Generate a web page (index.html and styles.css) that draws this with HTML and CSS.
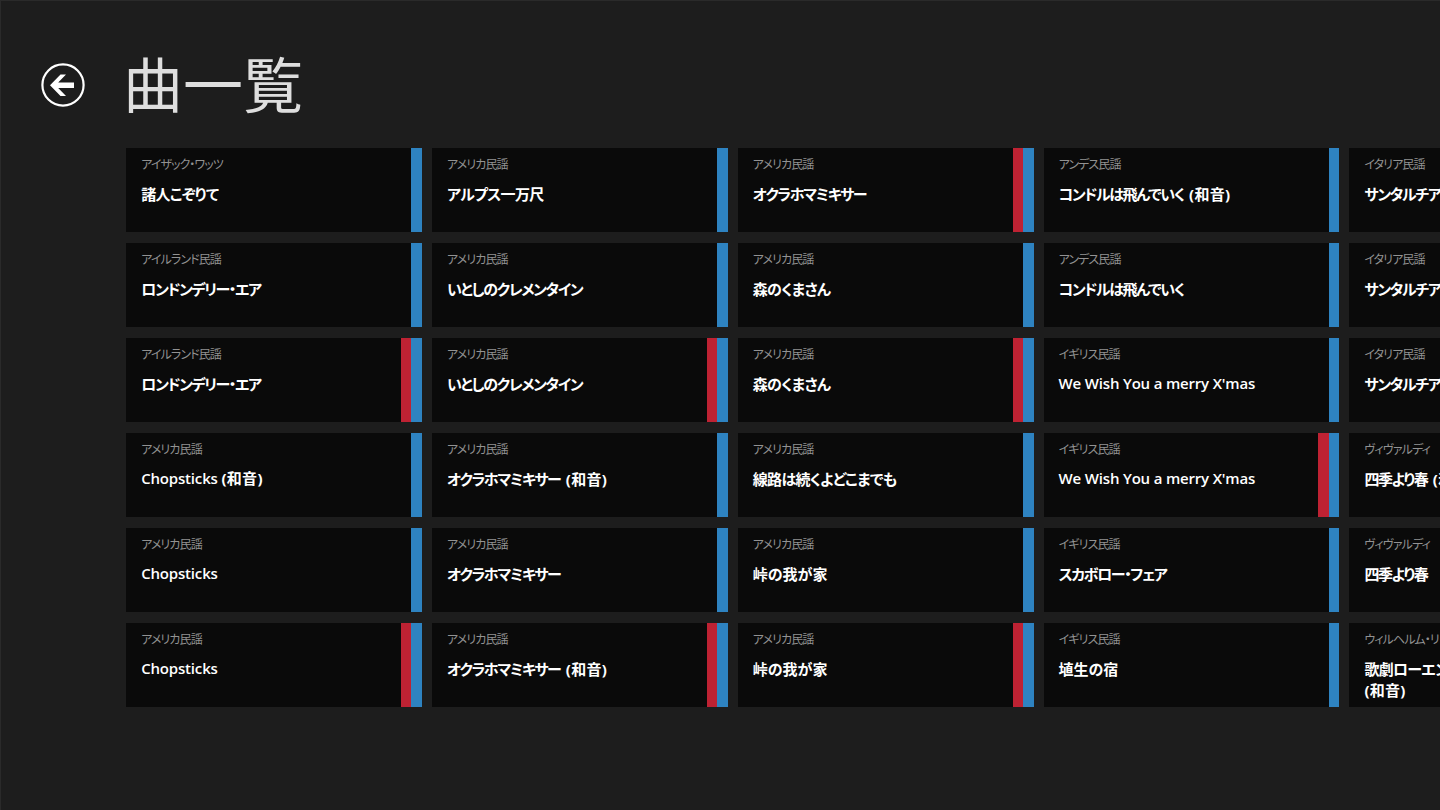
FILE: index.html
```html
<!DOCTYPE html>
<html lang="ja">
<head>
    <meta charset="UTF-8">
    <title>曲一覧</title>
    <link rel="stylesheet" href="styles.css">
</head>
<body>
<div class="page-header">
    <a class="back-button" href="javascript:void(0);">
        <svg width="44" height="44" viewBox="0 0 44 44">
            <circle cx="22" cy="22" r="20.6" fill="none" stroke="#fff" stroke-width="2.2"/>
            <path d="M9 22.2L19.5 11.5H25L17.2 19.4H33V25H17.2L25 32.9H19.5Z" fill="#fff"/>
        </svg>
    </a>
    <h1 class="page-title">曲一覧</h1>
</div>

<div class="song-grid">
    <!-- 1列目 -->
    <div class="song"><div class="song-info"><p class="song-artist">アイザック・ワッツ</p><p class="song-title">諸人こぞりて</p></div><span class="song-bar"></span></div>
    <div class="song"><div class="song-info"><p class="song-artist">アイルランド民謡</p><p class="song-title kana">ロンドンデリー・エア</p></div><span class="song-bar"></span></div>
    <div class="song"><div class="song-info"><p class="song-artist">アイルランド民謡</p><p class="song-title kana">ロンドンデリー・エア</p></div><span class="song-mark"></span><span class="song-bar"></span></div>
    <div class="song"><div class="song-info"><p class="song-artist">アメリカ民謡</p><p class="song-title latin">Chopsticks <span class="chord">(和音)</span></p></div><span class="song-bar"></span></div>
    <div class="song"><div class="song-info"><p class="song-artist">アメリカ民謡</p><p class="song-title latin">Chopsticks</p></div><span class="song-bar"></span></div>
    <div class="song"><div class="song-info"><p class="song-artist">アメリカ民謡</p><p class="song-title latin">Chopsticks</p></div><span class="song-mark"></span><span class="song-bar"></span></div>
    <!-- 2列目 -->
    <div class="song"><div class="song-info"><p class="song-artist">アメリカ民謡</p><p class="song-title">アルプス一万尺</p></div><span class="song-bar"></span></div>
    <div class="song"><div class="song-info"><p class="song-artist">アメリカ民謡</p><p class="song-title kana">いとしのクレメンタイン</p></div><span class="song-bar"></span></div>
    <div class="song"><div class="song-info"><p class="song-artist">アメリカ民謡</p><p class="song-title kana">いとしのクレメンタイン</p></div><span class="song-mark"></span><span class="song-bar"></span></div>
    <div class="song"><div class="song-info"><p class="song-artist">アメリカ民謡</p><p class="song-title kana">オクラホマミキサー <span class="chord">(和音)</span></p></div><span class="song-bar"></span></div>
    <div class="song"><div class="song-info"><p class="song-artist">アメリカ民謡</p><p class="song-title kana">オクラホマミキサー</p></div><span class="song-bar"></span></div>
    <div class="song"><div class="song-info"><p class="song-artist">アメリカ民謡</p><p class="song-title kana">オクラホマミキサー <span class="chord">(和音)</span></p></div><span class="song-mark"></span><span class="song-bar"></span></div>
    <!-- 3列目 -->
    <div class="song"><div class="song-info"><p class="song-artist">アメリカ民謡</p><p class="song-title kana">オクラホマミキサー</p></div><span class="song-mark"></span><span class="song-bar"></span></div>
    <div class="song"><div class="song-info"><p class="song-artist">アメリカ民謡</p><p class="song-title">森のくまさん</p></div><span class="song-bar"></span></div>
    <div class="song"><div class="song-info"><p class="song-artist">アメリカ民謡</p><p class="song-title">森のくまさん</p></div><span class="song-mark"></span><span class="song-bar"></span></div>
    <div class="song"><div class="song-info"><p class="song-artist">アメリカ民謡</p><p class="song-title">線路は続くよどこまでも</p></div><span class="song-bar"></span></div>
    <div class="song"><div class="song-info"><p class="song-artist">アメリカ民謡</p><p class="song-title kanji">峠の我が家</p></div><span class="song-bar"></span></div>
    <div class="song"><div class="song-info"><p class="song-artist">アメリカ民謡</p><p class="song-title kanji">峠の我が家</p></div><span class="song-mark"></span><span class="song-bar"></span></div>
    <!-- 4列目 -->
    <div class="song"><div class="song-info"><p class="song-artist">アンデス民謡</p><p class="song-title kana">コンドルは飛んでいく <span class="chord">(和音)</span></p></div><span class="song-bar"></span></div>
    <div class="song"><div class="song-info"><p class="song-artist">アンデス民謡</p><p class="song-title kana">コンドルは飛んでいく</p></div><span class="song-bar"></span></div>
    <div class="song"><div class="song-info"><p class="song-artist">イギリス民謡</p><p class="song-title latin">We Wish You a merry X'mas</p></div><span class="song-bar"></span></div>
    <div class="song"><div class="song-info"><p class="song-artist">イギリス民謡</p><p class="song-title latin">We Wish You a merry X'mas</p></div><span class="song-mark"></span><span class="song-bar"></span></div>
    <div class="song"><div class="song-info"><p class="song-artist">イギリス民謡</p><p class="song-title kana">スカボロー・フェア</p></div><span class="song-bar"></span></div>
    <div class="song"><div class="song-info"><p class="song-artist">イギリス民謡</p><p class="song-title kanji">埴生の宿</p></div><span class="song-bar"></span></div>
    <!-- 5列目 -->
    <div class="song"><div class="song-info"><p class="song-artist">イタリア民謡</p><p class="song-title kana">サンタルチア <span class="chord">(和音)</span></p></div><span class="song-bar"></span></div>
    <div class="song"><div class="song-info"><p class="song-artist">イタリア民謡</p><p class="song-title kana">サンタルチア</p></div><span class="song-bar"></span></div>
    <div class="song"><div class="song-info"><p class="song-artist">イタリア民謡</p><p class="song-title kana">サンタルチア</p></div><span class="song-bar"></span></div>
    <div class="song"><div class="song-info"><p class="song-artist">ヴィヴァルディ</p><p class="song-title kana">四季より春 <span class="chord">(和音)</span></p></div><span class="song-bar"></span></div>
    <div class="song"><div class="song-info"><p class="song-artist">ヴィヴァルディ</p><p class="song-title kana">四季より春</p></div><span class="song-bar"></span></div>
    <div class="song"><div class="song-info"><p class="song-artist">ウィルヘルム・リヒャルト・ワーグナー</p><p class="song-title">歌劇ローエングリンより婚礼の合唱<br><span class="chord">(和音)</span></p></div><span class="song-bar"></span></div>
</div>
</body>
</html>
```

FILE: styles.css
```css
html, body {
    height: 100%;
}

body {
    margin: 0;
    background: #1d1d1d;
    border-top: 1px solid #2a2a2a;
    border-left: 1px solid #2a2a2a;
    box-sizing: border-box;
    overflow: hidden;
    font-family: "Open Sans", "Noto Sans CJK JP", sans-serif;
    font-feature-settings: "palt";
    color: #fff;
}

p, h1 {
    margin: 0;
    padding: 0;
}

.page-header {
    display: flex;
    align-items: center;
    height: 147px;
    padding: 21px 0 0 40px;
    box-sizing: border-box;
}

.back-button {
    display: block;
    width: 44px;
    height: 44px;
}

.back-button svg {
    display: block;
}

.page-title {
    margin-left: 38px;
    font-size: 60px;
    font-weight: 400;
    line-height: 76px;
    color: #dedede;
    white-space: nowrap;
    font-feature-settings: normal;
}

.song-grid {
    display: grid;
    grid-auto-flow: column;
    grid-template-rows: repeat(6, 84px);
    grid-auto-columns: 295.8px;
    column-gap: 10px;
    row-gap: 11px;
    padding-left: 125.2px;
}

.song {
    display: flex;
    background: #0a0a0a;
}

.song-info {
    flex: 1;
    min-width: 0;
    padding: 8px 8px 0 15px;
}

.song-artist {
    font-size: 12px;
    line-height: 18px;
    letter-spacing: -0.9px;
    color: #929292;
    white-space: nowrap;
    overflow: hidden;
}

.song-title {
    margin-top: 10px;
    font-size: 15px;
    font-weight: 700;
    line-height: 21px;
    letter-spacing: -0.7px;
}

/* カタカナの多い曲名は詰める */
.song-title.kana {
    letter-spacing: -1.4px;
}

.song-title.kanji {
    letter-spacing: 0;
}

.song-title.latin {
    font-weight: 600;
    line-height: 19px;
    letter-spacing: -0.18px;
}

.chord {
    font-weight: 700;
    letter-spacing: 0.3px;
}

.kana .chord {
    margin-left: 3px;
}

.song-mark {
    width: 10.5px;
    background: #be2233;
}

.song-bar {
    width: 10.5px;
    background: #2e83c1;
}
```
